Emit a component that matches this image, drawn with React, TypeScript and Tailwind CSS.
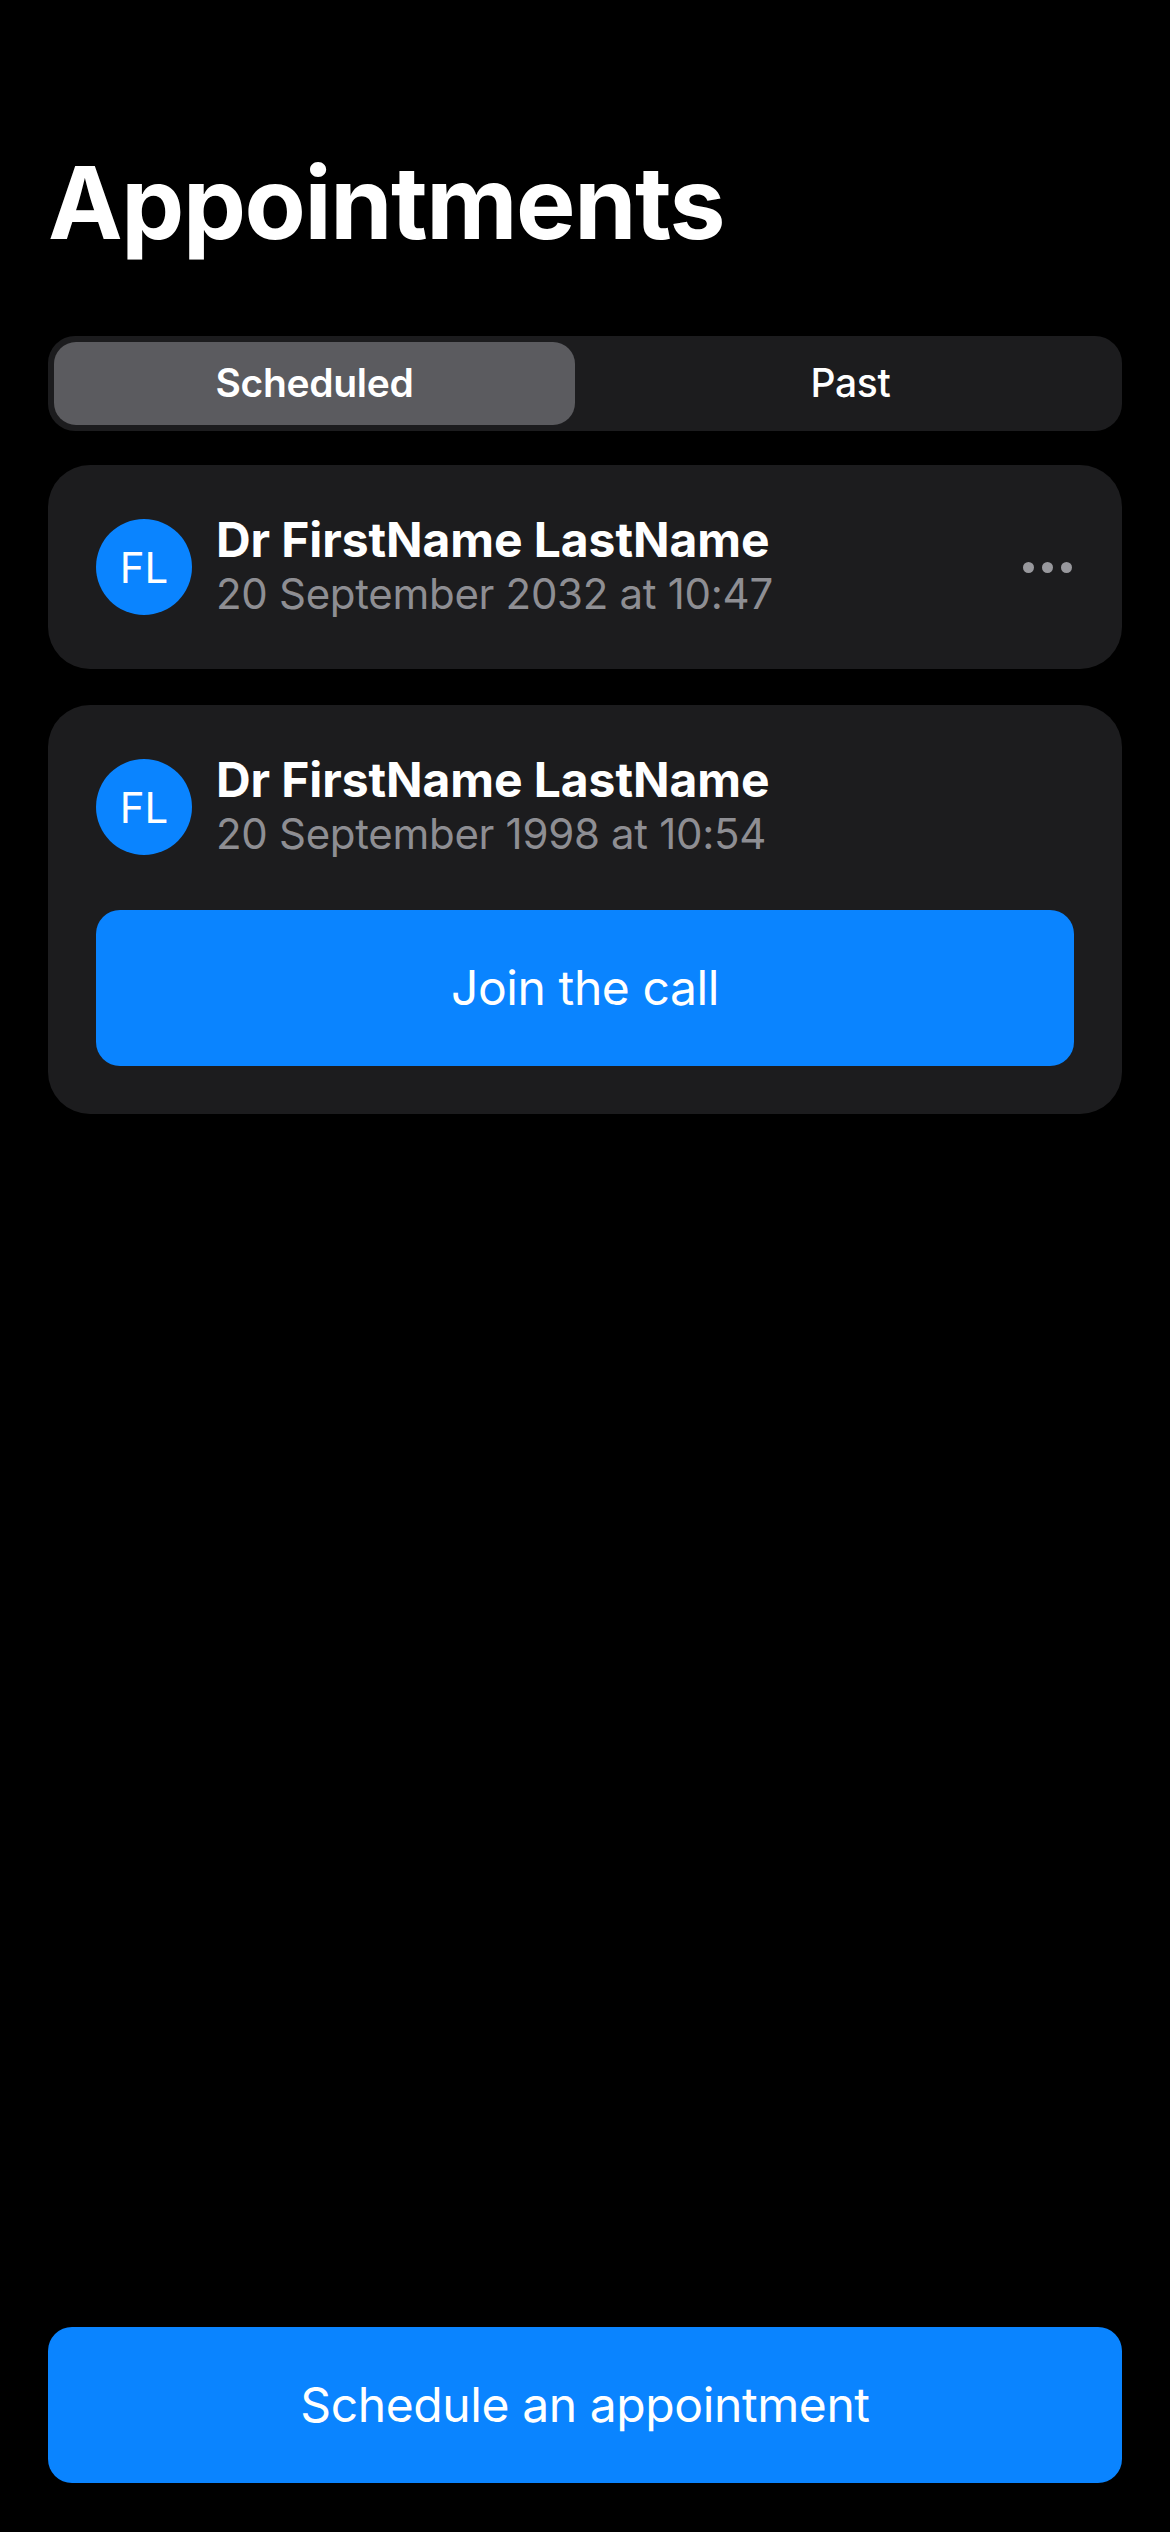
import React from "react";

const font = { fontFamily: "Inter, 'Noto Sans', sans-serif" };

function Avatar() {
  return (
    <div className="flex h-[96px] w-[96px] shrink-0 items-center justify-center rounded-full bg-[#0a84ff] text-[42px] font-normal text-white">
      FL
    </div>
  );
}

function Header({ date, more }: { date: string; more?: boolean }) {
  return (
    <div className="flex items-center">
      <Avatar />
      <div className="ml-[24px] flex flex-1 flex-col">
        <div className="text-[48px] font-bold leading-[54px] tracking-[-0.1px] text-white">
          Dr FirstName LastName
        </div>
        <div className="text-[42px] font-normal leading-[54px] tracking-[-0.3px] text-[#8e8e93]">
          {date}
        </div>
      </div>
      {more && (
        <div className="mr-[2px] flex items-center gap-[8px]">
          <span className="h-[11px] w-[11px] rounded-full bg-[#98989d]" />
          <span className="h-[11px] w-[11px] rounded-full bg-[#98989d]" />
          <span className="h-[11px] w-[11px] rounded-full bg-[#98989d]" />
        </div>
      )}
    </div>
  );
}

export default function App() {
  return (
    <div
      className="flex min-h-[2532px] w-[1170px] flex-col bg-black px-[48px] pb-[49px] pt-[152px] text-white"
      style={font}
    >
      <h1 className="text-[100px] font-bold leading-[102px] tracking-[-1.4px]">Appointments</h1>

      <div className="mt-[82px] flex h-[95px] rounded-[27px] bg-[#1c1c1e] p-[6px]">
        <div className="flex w-[521px] items-center justify-center rounded-[22px] bg-[#5b5b5f] text-[39px] font-semibold tracking-[-0.3px] text-white">
          Scheduled
        </div>
        <div className="flex flex-1 items-center justify-center pl-[10px] text-[39px] font-medium tracking-[-0.3px] text-white">
          Past
        </div>
      </div>

      <div className="mt-[34px] flex flex-col gap-[36px]">
        <div className="rounded-[42px] bg-[#1c1c1e] p-[48px]">
          <Header date="20 September 2032 at 10:47" more />
        </div>
        <div className="rounded-[42px] bg-[#1c1c1e] p-[48px]">
          <Header date="20 September 1998 at 10:54" />
          <button className="mt-[49px] flex h-[156px] w-full items-center justify-center rounded-[24px] bg-[#0a84ff] text-[48px] font-normal tracking-[-0.4px] text-white">
            Join the call
          </button>
        </div>
      </div>

      <button className="mt-auto flex h-[156px] w-full items-center justify-center rounded-[24px] bg-[#0a84ff] text-[48px] font-normal tracking-[-0.4px] text-white">
        Schedule an appointment
      </button>
    </div>
  );
}
